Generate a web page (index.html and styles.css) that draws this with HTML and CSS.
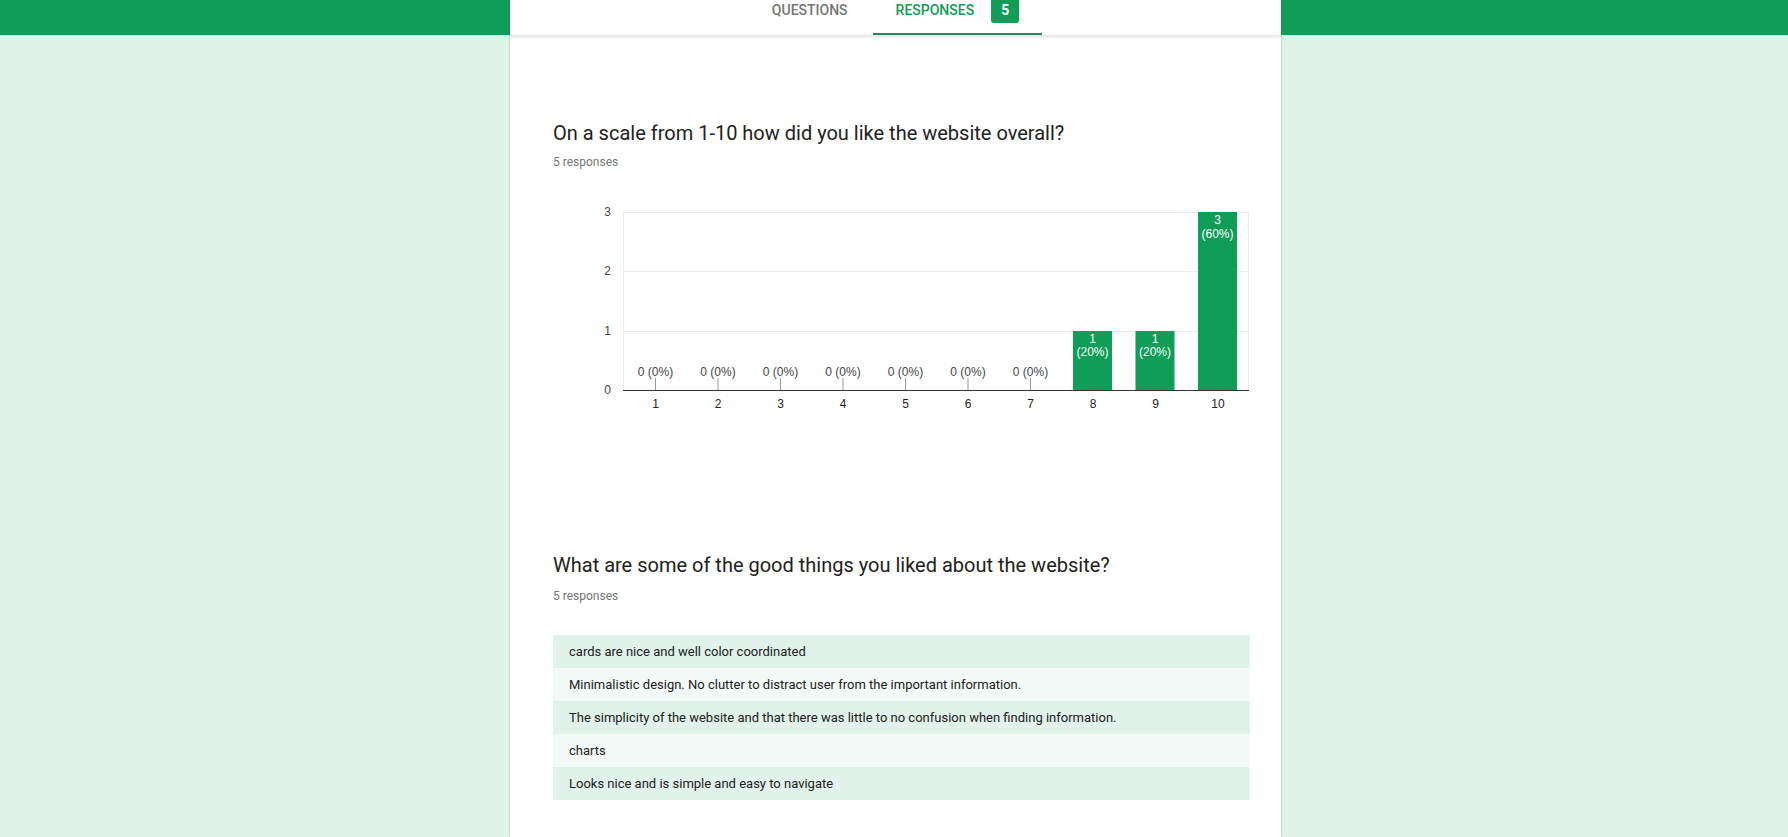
FILE: index.html
```html
<!DOCTYPE html>
<html lang="en">
<head>
<meta charset="utf-8">
<title>Responses</title>
<link rel="stylesheet" href="styles.css">
</head>
<body>
<header class="topbar">
  <nav class="tabs">
    <div class="tab">QUESTIONS</div>
    <div class="tab tab-active">RESPONSES <span class="badge">5</span></div>
  </nav>
</header>
<main class="card">
  <section class="question">
    <h2 class="q-title">On a scale from 1-10 how did you like the website overall?</h2>
    <div class="q-count">5 responses</div>
    <svg class="chart" width="697" height="230" viewBox="0 0 697 230">
      <g class="grid">
        <line x1="71" y1="12.5" x2="696" y2="12.5"/>
        <line x1="71" y1="71.5" x2="696" y2="71.5"/>
        <line x1="71" y1="131.5" x2="696" y2="131.5"/>
        <line x1="70.5" y1="12" x2="70.5" y2="190"/>
        <line x1="695.5" y1="12" x2="695.5" y2="190"/>
      </g>
      <g class="ylab">
        <text x="58" y="16">3</text>
        <text x="58" y="75">2</text>
        <text x="58" y="135">1</text>
        <text x="58" y="194">0</text>
      </g>
      <g class="bars">
        <rect x="520" y="131" width="39" height="60"/>
        <rect x="582.5" y="131" width="39" height="60"/>
        <rect x="645" y="12" width="39" height="179"/>
      </g>
      <g class="barlab">
        <text x="539.5" y="143">1</text>
        <text x="539.5" y="156">(20%)</text>
        <text x="602" y="143">1</text>
        <text x="602" y="156">(20%)</text>
        <text x="664.5" y="24">3</text>
        <text x="664.5" y="38">(60%)</text>
      </g>
      <g class="ticks">
        <line x1="102.5" y1="178" x2="102.5" y2="190"/>
        <line x1="165" y1="178" x2="165" y2="190"/>
        <line x1="227.5" y1="178" x2="227.5" y2="190"/>
        <line x1="290" y1="178" x2="290" y2="190"/>
        <line x1="352.5" y1="178" x2="352.5" y2="190"/>
        <line x1="415" y1="178" x2="415" y2="190"/>
        <line x1="477.5" y1="178" x2="477.5" y2="190"/>
      </g>
      <g class="zerolab">
        <text x="102.5" y="176">0 (0%)</text>
        <text x="165" y="176">0 (0%)</text>
        <text x="227.5" y="176">0 (0%)</text>
        <text x="290" y="176">0 (0%)</text>
        <text x="352.5" y="176">0 (0%)</text>
        <text x="415" y="176">0 (0%)</text>
        <text x="477.5" y="176">0 (0%)</text>
      </g>
      <line class="baseline" x1="70" y1="190.5" x2="696" y2="190.5"/>
      <g class="xlab">
        <text x="102.5" y="208">1</text>
        <text x="165" y="208">2</text>
        <text x="227.5" y="208">3</text>
        <text x="290" y="208">4</text>
        <text x="352.5" y="208">5</text>
        <text x="415" y="208">6</text>
        <text x="477.5" y="208">7</text>
        <text x="540" y="208">8</text>
        <text x="602.5" y="208">9</text>
        <text x="665" y="208">10</text>
      </g>
    </svg>
  </section>
  <section class="question q2">
    <h2 class="q-title">What are some of the good things you liked about the website?</h2>
    <div class="q-count">5 responses</div>
    <ul class="answers">
      <li>cards are nice and well color coordinated</li>
      <li>Minimalistic design. No clutter to distract user from the important information.</li>
      <li>The simplicity of the website and that there was little to no confusion when finding information.</li>
      <li>charts</li>
      <li>Looks nice and is simple and easy to navigate</li>
    </ul>
  </section>
</main>
</body>
</html>
```

FILE: styles.css
```css
html, body {
  margin: 0;
  padding: 0;
}
body {
  background: #e0f2e9;
  font-family: Roboto, "Noto Sans", sans-serif;
  min-height: 837px;
  overflow: hidden;
}
.topbar {
  background: #0f9d58;
  height: 35px;
  position: relative;
  z-index: 2;
}
.tabs {
  width: 771px;
  height: 35px;
  margin-left: calc(50% - 384px);
  background: #fff;
  display: flex;
  justify-content: center;
  gap: 2px;
  box-shadow: 0 2px 3px rgba(0,0,0,0.12);
  box-sizing: border-box;
}
.tab {
  box-sizing: border-box;
  height: 35px;
  padding: 0 23px;
  display: flex;
  align-items: flex-start;
  gap: 17px;
  font-size: 14px;
  font-weight: 500;
  line-height: 21px;
  color: #757575;
  border-bottom: 2px solid transparent;
}
.tab-active {
  color: #0f9d58;
  border-bottom-color: #26875a;
}
.badge {
  background: #0f9d58;
  color: #fff;
  font-weight: 700;
  font-size: 14px;
  width: 28px;
  height: 23px;
  line-height: 21px;
  text-align: center;
  border-radius: 0 0 3px 3px;
}
.card {
  width: 771px;
  margin-left: calc(50% - 384px);
  background: #fff;
  min-height: 802px;
  box-sizing: border-box;
  padding: 84px 30px 0 43px;
  box-shadow: 0 0 2px rgba(0,0,0,0.25);
}
.question {
  display: flex;
  flex-direction: column;
}
.q2 {
  margin-top: 121px;
}
.q-title {
  margin: 0;
  font-size: 20px;
  font-weight: 400;
  line-height: 28px;
  color: #212121;
}
.q-count {
  margin-top: 7px;
  font-size: 12px;
  line-height: 16px;
  color: #757575;
}
.q2 .q-count {
  margin-top: 9px;
}
.chart {
  display: block;
  margin-top: 30px;
  font-family: "Liberation Sans", Arial, sans-serif;
  font-size: 12px;
}
.grid line {
  stroke: #ebebeb;
  stroke-width: 1;
}
.ylab text {
  fill: #444;
  text-anchor: end;
}
.bars rect {
  fill: #0f9d58;
}
.barlab text {
  fill: #fff;
  text-anchor: middle;
}
.ticks line {
  stroke: #999;
  stroke-width: 1;
}
.zerolab text {
  fill: #444;
  text-anchor: middle;
}
.baseline {
  stroke: #333;
  stroke-width: 1;
}
.xlab text {
  fill: #222;
  text-anchor: middle;
}
.answers {
  list-style: none;
  margin: 31px 0 0;
  padding: 0;
  width: 697px;
}
.answers li {
  height: 33px;
  line-height: 33px;
  padding-left: 16px;
  font-size: 13px;
  color: #212121;
  background: #e0f2e9;
}
.answers li:nth-child(even) {
  background: #f3f9f6;
}
```
